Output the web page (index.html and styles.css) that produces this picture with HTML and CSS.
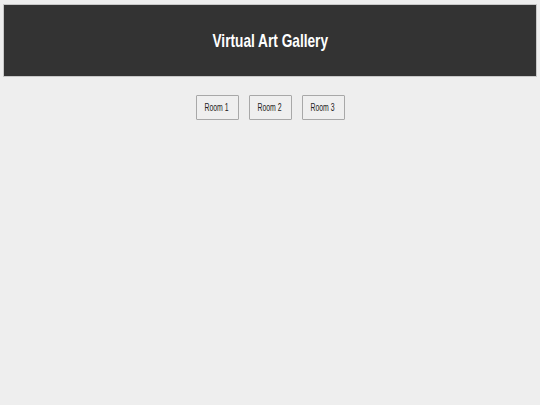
FILE: index.html
```html
<!DOCTYPE html>
<html>
<head>
<meta charset="utf-8">
<link rel="stylesheet" href="styles.css">
</head>
<body>
<header class="header"><h1 class="title"><span class="narrow wide">Virtual Art Gallery</span></h1></header>
<nav class="rooms">
  <button class="room"><span class="narrow">Room 1</span></button>
  <button class="room"><span class="narrow">Room 2</span></button>
  <button class="room"><span class="narrow">Room 3</span></button>
</nav>
</body>
</html>
```
FILE: styles.css
```css
html, body { background: #eeeeee; }
body {
  margin: 4px 3px;
  font-family: "Liberation Sans", Arial, sans-serif;
}
.narrow {
  display: inline-block;
  transform: scaleX(0.69);
  white-space: nowrap;
}
.wide {
  transform: scaleX(0.72);
}
.header {
  background: #333333;
  height: 73px;
  display: flex;
  align-items: center;
  justify-content: center;
  border: 1px solid #c8c8c8;
  box-sizing: border-box;
}
.title {
  margin: 0;
  color: #ffffff;
  font-size: 19px;
  font-weight: bold;
}
.rooms {
  display: flex;
  justify-content: center;
  gap: 10px;
  margin-top: 18px;
}
.room {
  width: 43px;
  height: 25px;
  padding: 0;
  font-family: inherit;
  font-size: 10px;
  color: #222;
  background: #efefef;
  border: 1px solid #a8a8a8;
  border-radius: 1px;
  display: flex;
  align-items: center;
  justify-content: center;
}
```
